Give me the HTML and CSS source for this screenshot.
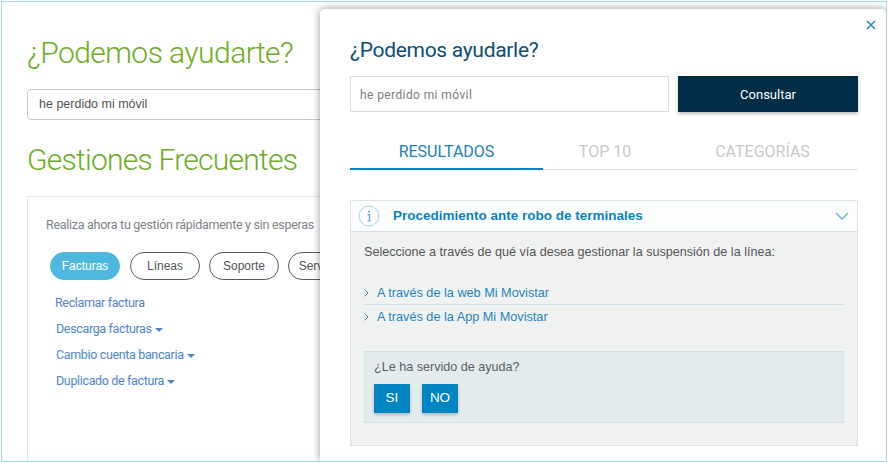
FILE: index.html
```html
<!DOCTYPE html>
<html lang="es">
<head>
<meta charset="utf-8">
<title>¿Podemos ayudarte?</title>
<link rel="stylesheet" href="styles.css">
</head>
<body>
<div class="frame">
  <main class="page">
    <h1 class="page-title">¿Podemos ayudarte?</h1>
    <div class="page-search">he perdido mi móvil</div>
    <h2 class="page-title second">Gestiones Frecuentes</h2>
    <section class="panel">
      <p class="panel-lead">Realiza ahora tu gestión rápidamente y sin esperas</p>
      <div class="pills">
        <span class="pill active">Facturas</span>
        <span class="pill">Líneas</span>
        <span class="pill">Soporte</span>
        <span class="pill">Servicios</span>
      </div>
      <ul class="gestiones">
        <li class="first">Reclamar factura</li>
        <li>Descarga facturas<i class="caret"></i></li>
        <li>Cambio cuenta bancaria<i class="caret"></i></li>
        <li>Duplicado de factura<i class="caret"></i></li>
      </ul>
    </section>
  </main>
  <aside class="modal">
    <svg class="close" viewBox="0 0 10 10" width="10" height="10"><path d="M1 1l8 8M9 1l-8 8" stroke="#1c8ec9" stroke-width="1.6" fill="none"/></svg>
    <h2 class="modal-title">¿Podemos ayudarle?</h2>
    <div class="query">
      <div class="query-input">he perdido mi móvil</div>
      <div class="query-btn">Consultar</div>
    </div>
    <nav class="tabs">
      <span class="tab active">RESULTADOS</span>
      <span class="tab">TOP 10</span>
      <span class="tab">CATEGORÍAS</span>
    </nav>
    <section class="result">
      <header class="result-head">
        <svg class="info" viewBox="0 0 22 22" width="22" height="22"><circle cx="11" cy="11" r="10" fill="none" stroke="#a5d5ec" stroke-width="1"/><circle cx="11" cy="6.6" r="1.1" fill="#5fb0dc"/><path d="M9.6 9.6h1.9v6.2M9.6 15.9h3.2" fill="none" stroke="#5fb0dc" stroke-width="1.3"/></svg>
        <h3 class="result-title">Procedimiento ante robo de terminales</h3>
        <svg class="chev" viewBox="0 0 14 8" width="14" height="8"><path d="M1 1l6 6 6-6" fill="none" stroke="#5db8e0" stroke-width="1.3"/></svg>
      </header>
      <div class="result-body">
        <p class="result-text">Seleccione a través de qué vía desea gestionar la suspensión de la línea:</p>
        <ul class="ways">
          <li><svg class="gt" viewBox="0 0 5 8" width="5" height="8"><path d="M.7.7L4 4 .7 7.3" fill="none" stroke="#4a7d9b" stroke-width="1"/></svg>A través de la web Mi Movistar</li>
          <li><svg class="gt" viewBox="0 0 5 8" width="5" height="8"><path d="M.7.7L4 4 .7 7.3" fill="none" stroke="#4a7d9b" stroke-width="1"/></svg>A través de la App Mi Movistar</li>
        </ul>
        <div class="feedback">
          <p class="feedback-q">¿Le ha servido de ayuda?</p>
          <div class="feedback-btns">
            <span class="fb">SI</span>
            <span class="fb">NO</span>
          </div>
        </div>
      </div>
    </section>
  </aside>
</div>
</body>
</html>
```
FILE: styles.css
```css
* { box-sizing: border-box; }
html, body { margin: 0; padding: 0; background: #fff; }
body { width: 889px; height: 463px; overflow: hidden; padding: 1px 2px 1px 1px; font-family: "Liberation Sans", Arial, sans-serif; }
ul { list-style: none; margin: 0; padding: 0; }
h1, h2, h3, p { margin: 0; font-weight: normal; }

.frame { position: relative; width: 886px; height: 461px; border: 1px solid #a3d8e0; overflow: hidden; background: #fff; }

.page { padding: 29px 0 0 25px; width: 700px; }
.page-title { font-family: "Roboto", sans-serif; font-weight: 300; font-size: 30px; line-height: 44px; letter-spacing: -0.55px; color: #6cae23; white-space: nowrap; }
.page-search { margin-top: 14px; height: 31px; border: 1px solid #c8c8c8; border-radius: 4px; padding-left: 11px; font-size: 12.5px; line-height: 28px; color: #555; }
.second { margin-top: 18px; letter-spacing: -0.75px; }
.panel { margin-top: 14px; height: 300px; border: 1px solid #e6e6e6; padding: 18px 0 0 18px; }
.panel-lead { font-family: "Roboto", sans-serif; font-size: 12.5px; letter-spacing: -0.28px; line-height: 20px; color: #7d8389; white-space: nowrap; }
.pills { display: flex; gap: 9px; margin-top: 17px; padding-left: 4px; }
.pill { flex: none; width: 70px; height: 28px; border: 1px solid #555a60; border-radius: 14px; text-align: center; font-size: 12px; line-height: 26px; color: #555; white-space: nowrap; overflow: hidden; }
.pill.active { background: #4fb8de; border-color: #4fb8de; color: #fff; margin-right: 1px; }
.gestiones { margin-top: 13px; padding-left: 10px; font-family: "Roboto", sans-serif; font-size: 12.5px; letter-spacing: -0.35px; line-height: 20px; color: #4d86cd; }
.gestiones li { margin-top: 6px; }
.gestiones li.first { margin-top: 0; margin-left: -1px; margin-bottom: 1px; }
.caret { display: inline-block; margin-left: 3px; vertical-align: middle; border-top: 4px solid #4d86cd; border-left: 4px solid transparent; border-right: 4px solid transparent; }

.modal { position: absolute; left: 318px; top: 7px; width: 566px; height: 452px; background: #fff; border-radius: 5px 5px 0 0; box-shadow: 0 0 9px rgba(0,0,0,.42); padding: 27px 28px 0 30px; }
.close { position: absolute; top: 11px; right: 10px; }
.modal-title { font-family: "Roboto", sans-serif; font-size: 21px; letter-spacing: -0.3px; line-height: 28px; color: #0b4f74; white-space: nowrap; }
.query { display: flex; gap: 9px; margin-top: 12px; }
.query-input { width: 319px; height: 36px; border: 1px solid #dcdcdc; padding-left: 9px; font-family: "Roboto", sans-serif; font-size: 12px; letter-spacing: 0.4px; line-height: 37px; color: #7d7d7d; }
.query-btn { width: 180px; height: 36px; background: #012d46; color: #fff; font-family: "Roboto", sans-serif; font-size: 13px; line-height: 38px; text-align: center; box-shadow: 0 2px 3px rgba(0,0,0,.25); }
.tabs { display: grid; grid-template-columns: 193px 124px 1fr; margin-top: 20px; border-bottom: 1px solid #dedede; height: 38px; }
.tab { height: 38px; text-align: center; font-family: "Roboto", sans-serif; font-size: 16px; line-height: 39px; color: #c6c9cb; }
.tab.active { color: #1a80bd; border-bottom: 2px solid #0a82c4; }

.result { margin-top: 30px; height: 246px; border: 1px solid #dfe3e4; background: #f0f2f2; }
.result-head { display: flex; align-items: center; height: 31px; background: #fcfdfd; border-bottom: 1px solid #d4e0e6; padding: 0 8px 0 7px; }
.result-title { flex: 1; margin-left: 13px; padding-bottom: 2px; font-size: 13.5px; font-weight: bold; color: #0a83c2; white-space: nowrap; }
.result-body { padding: 12px 13px 0; }
.result-text { font-size: 12.6px; line-height: 16px; color: #555; white-space: nowrap; }
.ways { margin-top: 20px; font-size: 12.7px; color: #1b85c1; }
.ways li { height: 24px; line-height: 24px; white-space: nowrap; }
.ways li:first-child { height: 25px; line-height: 26px; border-bottom: 1px solid #cfdfe7; }
.gt { display: inline-block; margin: 0 8px 0 0; }
.feedback { margin-top: 22px; height: 72px; border: 1px solid #d3e0e4; background: #e3ebee; padding: 7px 9px 0; }
.feedback-q { font-size: 12.6px; line-height: 17px; color: #5b5f62; }
.feedback-btns { display: flex; gap: 12px; margin-top: 8px; }
.fb { width: 36px; height: 29px; background: #0085c3; color: #fff; font-size: 13.5px; line-height: 28px; text-align: center; box-shadow: 0 2px 3px rgba(0,0,0,.2); }
```
